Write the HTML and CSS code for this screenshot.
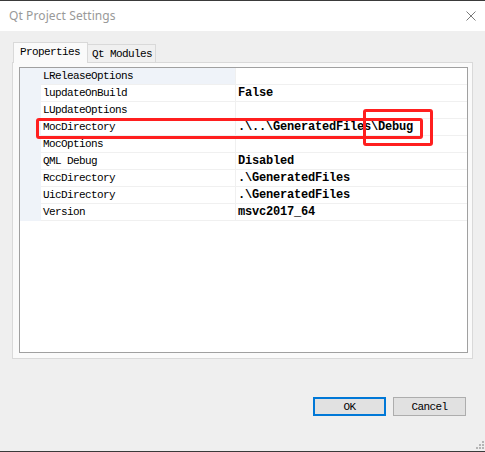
FILE: index.html
```html
<!DOCTYPE html>
<html lang="en">
<head>
  <meta charset="UTF-8">
  <title>Qt Project Settings</title>
  <link rel="stylesheet" href="styles.css">
</head>
<body>
  <div class="window">
    <div class="titlebar">
      <span class="title">Qt Project Settings</span>
      <svg class="close" width="10" height="10" viewBox="0 0 10 10">
        <path d="M0.5 0.5 L9.5 9.5 M9.5 0.5 L0.5 9.5" stroke="#7a7a7a" stroke-width="1" fill="none"/>
      </svg>
    </div>

    <div class="dialog">
      <div class="tabs">
        <div class="tab active">Properties</div>
        <div class="tab">Qt Modules</div>
      </div>

      <div class="pane">
        <div class="grid">
          <div class="row current">
            <div class="gutter"></div>
            <div class="name">LReleaseOptions</div>
            <div class="value"></div>
          </div>
          <div class="row">
            <div class="gutter"></div>
            <div class="name">lupdateOnBuild</div>
            <div class="value">False</div>
          </div>
          <div class="row">
            <div class="gutter"></div>
            <div class="name">LUpdateOptions</div>
            <div class="value"></div>
          </div>
          <div class="row">
            <div class="gutter"></div>
            <div class="name">MocDirectory</div>
            <div class="value">.\..\GeneratedFiles\Debug</div>
          </div>
          <div class="row">
            <div class="gutter"></div>
            <div class="name">MocOptions</div>
            <div class="value"></div>
          </div>
          <div class="row">
            <div class="gutter"></div>
            <div class="name">QML Debug</div>
            <div class="value">Disabled</div>
          </div>
          <div class="row">
            <div class="gutter"></div>
            <div class="name">RccDirectory</div>
            <div class="value">.\GeneratedFiles</div>
          </div>
          <div class="row">
            <div class="gutter"></div>
            <div class="name">UicDirectory</div>
            <div class="value">.\GeneratedFiles</div>
          </div>
          <div class="row">
            <div class="gutter"></div>
            <div class="name">Version</div>
            <div class="value">msvc2017_64</div>
          </div>
        </div>
      </div>

      <div class="actions">
        <button class="btn default">OK</button>
        <button class="btn">Cancel</button>
      </div>

      <div class="grip">
        <svg width="8" height="8" viewBox="0 0 8 8">
          <rect x="6" y="0" width="2" height="2" fill="#b5b5b5"/>
          <rect x="3" y="3" width="2" height="2" fill="#b5b5b5"/>
          <rect x="6" y="3" width="2" height="2" fill="#b5b5b5"/>
          <rect x="0" y="6" width="2" height="2" fill="#b5b5b5"/>
          <rect x="3" y="6" width="2" height="2" fill="#b5b5b5"/>
          <rect x="6" y="6" width="2" height="2" fill="#b5b5b5"/>
        </svg>
      </div>
    </div>

    <!-- red annotation boxes drawn over the screenshot -->
    <div class="mark mark-row"></div>
    <div class="mark mark-debug"></div>
  </div>
</body>
</html>
```

FILE: styles.css
```css
body {
  margin: 0;
  font-family: "Liberation Mono", "DejaVu Sans Mono", monospace;
  font-size: 11px;
  letter-spacing: -0.6px;
  color: #000;
}

.window {
  position: relative;
  width: 485px;
  height: 452px;
  box-sizing: border-box;
  border-top: 1px solid #3a3a3a;
  border-bottom: 1px solid #3a3a3a;
  background: #efefef;
  display: flex;
  flex-direction: column;
}

.titlebar {
  height: 30px;
  flex: none;
  background: #fff;
  display: flex;
  align-items: center;
  justify-content: space-between;
  padding: 0 9px;
}

.title {
  font-family: "Noto Sans", "Liberation Sans", sans-serif;
  font-size: 12px;
  letter-spacing: 0.1px;
  color: #999;
  margin-top: -1px;
}

.dialog {
  flex: 1;
  display: flex;
  flex-direction: column;
  padding: 11px 0 0 12px;
}

.tabs {
  display: flex;
  align-items: flex-end;
  height: 20px;
  padding-left: 1px;
}

.tab {
  box-sizing: border-box;
  height: 18px;
  width: 68px;
  padding-left: 4px;
  line-height: 18px;
  background: #f0f0f0;
  border-top: 1px solid #d9d9d9;
  border-right: 1px solid #d9d9d9;
}

.tab.active {
  position: relative;
  z-index: 1;
  height: 21px;
  width: 75px;
  padding-left: 6px;
  margin-bottom: -1px;
  line-height: 19px;
  background: #fafafa;
  border: 1px solid #d9d9d9;
  border-bottom: 0;
}

.pane {
  width: 461px;
  height: 297px;
  box-sizing: border-box;
  border: 1px solid #d9d9d9;
  background: #fafafa;
  padding: 4px 4px 5px 6px;
}

.grid {
  height: 100%;
  box-sizing: border-box;
  border: 1px solid #a0a0a0;
  background: #fff;
}

.row {
  display: grid;
  grid-template-columns: 21px 195px 1fr;
  height: 17px;
  line-height: 15px;
}

.gutter {
  background: #eff3f9;
}

.name,
.value {
  padding-top: 1px;
  border-bottom: 1px solid #f0f0f0;
  white-space: nowrap;
}

.name {
  padding-left: 2px;
  border-right: 1px solid #f0f0f0;
}

.value {
  padding-left: 2px;
  font-size: 12px;
  font-weight: bold;
  letter-spacing: -0.2px;
}

.row.current .name {
  background: #eff3f9;
}

.actions {
  display: flex;
  justify-content: flex-end;
  gap: 7px;
  margin-top: 38px;
  padding-right: 19px;
}

.btn {
  width: 73px;
  height: 19px;
  box-sizing: border-box;
  padding: 0;
  font: inherit;
  letter-spacing: -0.6px;
  color: #000;
  background: #e1e1e1;
  border: 1px solid #adadad;
}

.btn.default {
  border: 2px solid #0078d7;
}

.grip {
  margin-top: auto;
  display: flex;
  justify-content: flex-end;
  padding: 0 1px 2px 0;
}

.grip svg {
  display: block;
}

.mark {
  position: absolute;
  box-sizing: border-box;
  border: 3px solid #ff1f1f;
  border-radius: 3px;
}

.mark-row {
  left: 36px;
  top: 117px;
  width: 387px;
  height: 21px;
}

.mark-debug {
  left: 363px;
  top: 108px;
  width: 70px;
  height: 37px;
}
```
